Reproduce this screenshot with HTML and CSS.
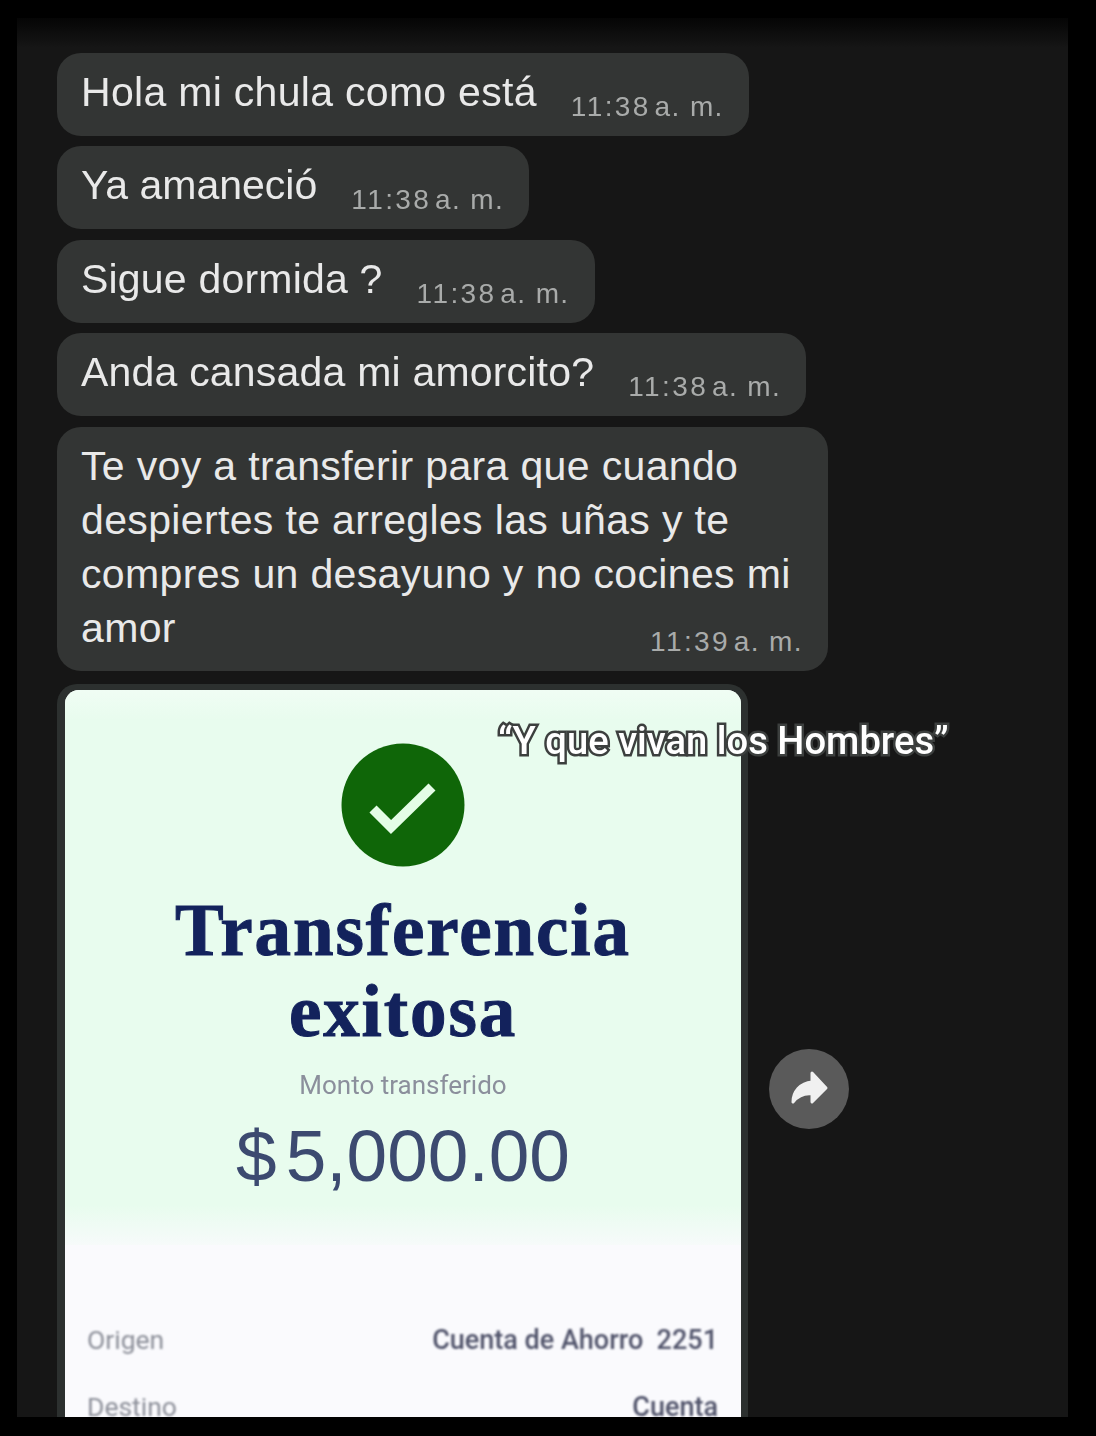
FILE: index.html
```html
<!DOCTYPE html>
<html lang="es">
<head>
  <meta charset="UTF-8">
  <title>Chat</title>
  <link rel="stylesheet" href="styles.css">
</head>
<body>
  <div class="screen">
    <div class="chat">
      <div class="bubble">
        <span class="text wide">Hola mi chula como está</span>
        <span class="time"><span class="clock">11:38</span>&hairsp;a. m.</span>
      </div>
      <div class="bubble">
        <span class="text tight">Ya amaneció</span>
        <span class="time"><span class="clock">11:38</span>&hairsp;a. m.</span>
      </div>
      <div class="bubble">
        <span class="text">Sigue dormida ?</span>
        <span class="time"><span class="clock">11:38</span>&hairsp;a. m.</span>
      </div>
      <div class="bubble">
        <span class="text">Anda cansada mi amorcito?</span>
        <span class="time"><span class="clock">11:38</span>&hairsp;a. m.</span>
      </div>
      <div class="bubble long">
        <p class="long-text">Te voy a transferir para que cuando<br>despiertes te arregles las uñas y te<br>compres un desayuno y no cocines mi<br>amor</p>
        <span class="time long-time"><span class="clock">11:39</span>&hairsp;a. m.</span>
      </div>

      <div class="photo-row">
        <div class="photo-bubble">
          <div class="receipt">
            <div class="receipt-top">
              <svg class="check" width="124" height="124" viewBox="0 0 124 124">
                <circle cx="62" cy="62" r="61.5" fill="#0f6608"/>
                <path d="M32 66 L50 84 L91 44" fill="none" stroke="#e4fde6" stroke-width="10"/>
              </svg>
              <h2>Transferencia<br>exitosa</h2>
              <div class="amount-label">Monto transferido</div>
              <div class="amount">$<span class="amount-num">5,000.00</span></div>
            </div>
            <div class="receipt-rows">
              <div class="row">
                <span class="row-label">Origen</span>
                <span class="row-value">Cuenta de Ahorro&nbsp; 2251</span>
              </div>
              <div class="row">
                <span class="row-label">Destino</span>
                <span class="row-value">Cuenta</span>
              </div>
            </div>
          </div>
        </div>
        <button class="forward" aria-label="Reenviar">
          <svg width="80" height="80" viewBox="0 0 80 80">
            <path d="M43 24 L57 39 L43 53 V45 C35 44 29 47 24 53 C24 43 31 34 43 33 Z" fill="#f0f0f0" stroke="#f0f0f0" stroke-width="3" stroke-linejoin="round"/>
          </svg>
        </button>
      </div>
    </div>

    <div class="caption">“Y que vivan los Hombres”</div>
  </div>
</body>
</html>
```

FILE: styles.css
```css
* {
  margin: 0;
  padding: 0;
  box-sizing: border-box;
}
html, body {
  height: 100%;
}
body {
  background: #000;
  padding: 18px 28px 19px 17px;
  overflow: hidden;
  font-family: 'Liberation Sans', Roboto, sans-serif;
}
.screen {
  position: relative;
  height: 1399px;
  overflow: hidden;
  background: linear-gradient(#050505 0, #161616 30px);
}
.chat {
  display: flex;
  flex-direction: column;
  align-items: flex-start;
  gap: 10.4px;
  padding: 35px 0 0 40px;
  filter: blur(0.5px);
}
.bubble {
  display: flex;
  height: 83px;
  padding: 0 25px 0 24px;
  gap: 34px;
  background: #333534;
  border-radius: 24px;
  color: #e9e9e9;
}
.text {
  font-size: 41px;
  letter-spacing: 0.2px;
  line-height: 78px;
  white-space: nowrap;
}
.text.wide {
  letter-spacing: 0.3px;
}
.text.tight {
  letter-spacing: 0;
}
.time {
  font-size: 28px;
  letter-spacing: 1.4px;
  line-height: 32px;
  margin-top: 38px;
  color: #a9abaa;
  white-space: nowrap;
}
.clock {
  letter-spacing: 2.4px;
}
.bubble.long {
  display: block;
  position: relative;
  width: 771px;
  height: 244px;
  padding-top: 12px;
}
.long-text {
  font-size: 41px;
  letter-spacing: 0.35px;
  line-height: 54px;
}
.long-time {
  position: absolute;
  right: 25px;
  bottom: 13px;
  margin: 0;
}
.photo-row {
  display: flex;
  align-items: flex-start;
  gap: 21px;
  margin-top: 3px;
}
.photo-bubble {
  width: 691px;
  height: 760px;
  padding: 6px 7px 0 8px;
  background: #2c302f;
  border-radius: 20px;
}
.receipt {
  height: 100%;
  overflow: hidden;
  border-radius: 14px 14px 0 0;
  background: #fafafd;
}
.receipt-top {
  display: flex;
  flex-direction: column;
  align-items: center;
  height: 555px;
  padding-top: 53px;
  background: linear-gradient(#f0fdf4 0, #e8fcee 30px, #e8fcee 515px, #fafafd 565px);
}
.check {
  display: block;
}
h2 {
  margin-top: 23px;
  font-family: 'Liberation Serif', serif;
  font-size: 73px;
  letter-spacing: 1.9px;
  font-weight: 700;
  line-height: 81px;
  text-align: center;
  color: #13225c;
  -webkit-text-stroke: 1px #13225c;
}
.amount-label {
  margin-top: 18px;
  font-family: Roboto, sans-serif;
  font-size: 26px;
  line-height: 30px;
  color: #8b8f9c;
}
.amount {
  margin-top: 15px;
  font-size: 73px;
  line-height: 82px;
  color: #3c4a70;
}
.amount-num {
  margin-left: 9px;
}
.receipt-rows {
  display: flex;
  flex-direction: column;
  gap: 37px;
  padding: 80px 23px 0 22px;
  filter: blur(0.8px);
}
.row {
  display: flex;
  justify-content: space-between;
  font-family: Roboto, sans-serif;
  line-height: 30px;
}
.row-label {
  font-size: 26.5px;
  color: #8c8f99;
}
.row-value {
  font-size: 27px;
  font-weight: 500;
  color: #50536a;
}
.forward {
  width: 80px;
  height: 80px;
  margin-top: 365px;
  border: none;
  border-radius: 50%;
  background: #5a5a5a;
}
.forward svg {
  display: block;
}
.caption {
  position: absolute;
  left: 481px;
  top: 700px;
  font-family: Roboto, sans-serif;
  font-size: 38.2px;
  line-height: 46px;
  font-weight: 500;
  white-space: nowrap;
  color: #fff;
  -webkit-text-stroke: 5px #3c3f3e;
  paint-order: stroke fill;
  filter: blur(0.5px);
}
```
